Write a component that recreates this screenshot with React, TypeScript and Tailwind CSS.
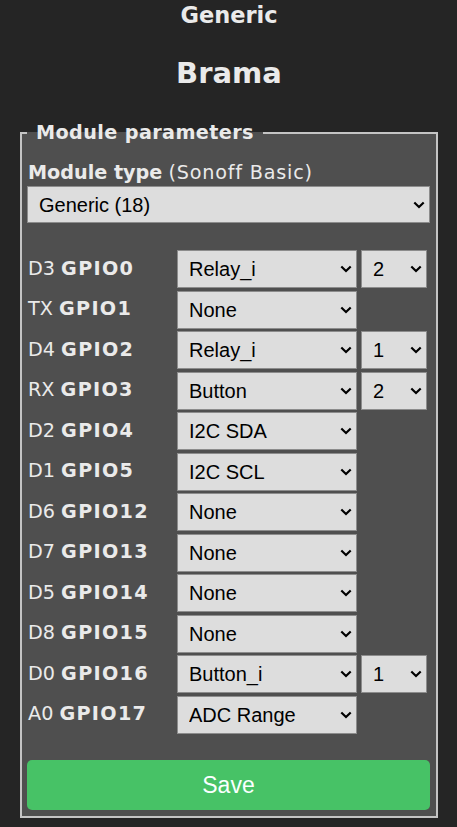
import React from 'react';

const rows = [
  { pin: 'D3', gpio: 'GPIO0', fn: 'Relay_i', idx: '2' },
  { pin: 'TX', gpio: 'GPIO1', fn: 'None' },
  { pin: 'D4', gpio: 'GPIO2', fn: 'Relay_i', idx: '1' },
  { pin: 'RX', gpio: 'GPIO3', fn: 'Button', idx: '2' },
  { pin: 'D2', gpio: 'GPIO4', fn: 'I2C SDA' },
  { pin: 'D1', gpio: 'GPIO5', fn: 'I2C SCL' },
  { pin: 'D6', gpio: 'GPIO12', fn: 'None' },
  { pin: 'D7', gpio: 'GPIO13', fn: 'None' },
  { pin: 'D5', gpio: 'GPIO14', fn: 'None' },
  { pin: 'D8', gpio: 'GPIO15', fn: 'None' },
  { pin: 'D0', gpio: 'GPIO16', fn: 'Button_i', idx: '1' },
  { pin: 'A0', gpio: 'GPIO17', fn: 'ADC Range' },
];

const Chevron = () => (
  <svg
    width="12"
    height="8"
    viewBox="0 0 12 8"
    className="pointer-events-none absolute right-[5px] top-1/2 -translate-y-1/2"
  >
    <path d="M1.3 1.5L6 6L10.7 1.5" fill="none" stroke="#000" strokeWidth="2.2" />
  </svg>
);

const Select = ({ value, className }: { value: string; className: string }) => (
  <div className={`relative shrink-0 ${className}`}>
    <select
      defaultValue={value}
      className="appearance-none w-full h-full bg-[#dddddd] text-black border border-[#8c8c8c] pl-[11px] pr-6 text-[20px] font-['Liberation_Sans',Arial,sans-serif] outline-none"
    >
      <option value={value}>{value}</option>
    </select>
    <Chevron />
  </div>
);

const App = () => {
  return (
    <div className="min-h-screen bg-[#252525] text-[#eaeaea] font-['DejaVu_Sans',Verdana,sans-serif] pl-5 pr-[19px]">
      {/* titles */}
      <h3 className="h-[30px] leading-[30px] text-center text-[22.5px] font-bold">Generic</h3>
      <h2 className="mt-[25px] h-[36px] leading-[36px] text-center text-[29px] font-bold">Brama</h2>

      {/* Module parameters */}
      <fieldset className="mt-[30px] bg-[#4f4f4f] border-2 border-[#c4c4c4] pl-[5px] pr-[6px] pt-0 pb-[6px] min-w-0">
        <legend className="px-[9px] ml-0 text-[19.2px] leading-[24px] font-bold tracking-[0.4px]">Module parameters</legend>

        <div className="mt-[16px] h-[24px] leading-[24px] text-[19.2px] pl-[1px]">
          <b>Module type</b> <span className="tracking-[0.8px]">(Sonoff Basic)</span>
        </div>
        <Select value="Generic (18)" className="mt-[1px] h-[37px] w-full" />

        <div className="mt-[26px] flex flex-col">
          {rows.map((r) => (
            <div key={r.gpio} className="h-[40.5px] flex items-center">
              <div className="w-[150px] shrink-0 pl-[1px] text-[19.2px] whitespace-nowrap">
                {r.pin} <b className="tracking-[1.3px]">{r.gpio}</b>
              </div>
              <Select value={r.fn} className="h-[38px] w-[180px]" />
              {r.idx && <Select value={r.idx} className="ml-[4px] h-[38px] w-[66px]" />}
            </div>
          ))}
        </div>

        <button className="mt-[25px] w-full h-[50px] rounded-[5px] bg-[#47c266] text-[#faffff] text-[23px] font-['Liberation_Sans',Arial,sans-serif]">
          Save
        </button>
      </fieldset>
    </div>
  );
};

export default App;
